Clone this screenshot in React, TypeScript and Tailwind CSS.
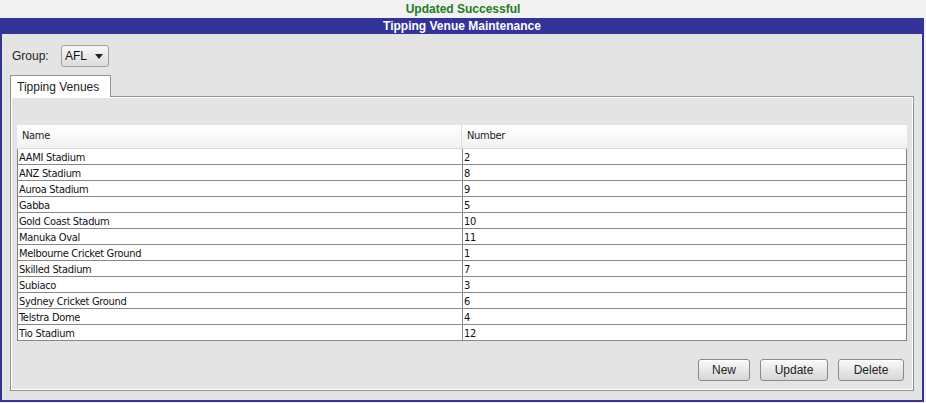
import React from 'react';

const venues: [string, number][] = [
  ['AAMI Stadium', 2],
  ['ANZ Stadium', 8],
  ['Auroa Stadium', 9],
  ['Gabba', 5],
  ['Gold Coast Stadum', 10],
  ['Manuka Oval', 11],
  ['Melbourne Cricket Ground', 1],
  ['Skilled Stadium', 7],
  ['Subiaco', 3],
  ['Sydney Cricket Ground', 6],
  ['Telstra Dome', 4],
  ['Tio Stadium', 12],
];

function Btn({ label, width }: { label: string; width: string }) {
  return (
    <button
      className={`${width} h-[22px] rounded-[3px] border border-[#8a8a8a] bg-gradient-to-b from-[#fafafa] to-[#d6d6d6] text-[12px] text-[#222] shadow-[inset_0_1px_0_#fff]`}
    >
      {label}
    </button>
  );
}

export default function App() {
  return (
    <div
      className="w-[926px] h-[403px] bg-[#f2f2f2] overflow-hidden"
      style={{ fontFamily: '"Liberation Sans", Arial, sans-serif' }}
    >
      <div className="h-[18px] flex items-center justify-center text-[12px] font-bold text-[#1e7d1e]">
        Updated Successful
      </div>
      <div className="w-[924px] h-[384px] border-l-2 border-r-2 border-b-2 border-[#333399] bg-[#e4e4e4] flex flex-col">
        <div className="h-[16px] -mx-[2px] bg-[#333399] flex items-center justify-center text-[12px] font-bold text-white">
          Tipping Venue Maintenance
        </div>
        <div className="flex items-center pl-[10px] pt-[11px] h-[33px]">
          <span className="text-[12px] text-[#222] w-[49px]">Group:</span>
          <div className="w-[48px] h-[22px] rounded-[3px] border border-[#a0a0a0] bg-gradient-to-b from-[#f8f8f8] to-[#dcdcdc] flex items-center pl-[3px] pr-[5px] justify-between">
            <span className="text-[12px] text-[#111]">AFL</span>
            <svg width="8" height="5" viewBox="0 0 8 5">
              <path d="M0 0h8L4 5z" fill="#222" />
            </svg>
          </div>
        </div>
        <div className="pl-[8px] pt-[8px]">
          <div className="w-[101px] h-[22px] border border-b-0 border-[#919191] bg-white flex items-center pl-[6px] text-[12px] text-[#222] relative z-10">
            Tipping Venues
          </div>
          <div className="-mt-px w-[904px] h-[295px] border border-[#919191] shadow-[inset_1px_1px_0_#fff,inset_-1px_-1px_0_#fff] px-[6px] pt-[28px] flex flex-col">
            <div
              className="w-[890px] text-[11px] text-[#111] tracking-[-0.3px]"
              style={{ fontFamily: '"DejaVu Sans Condensed", "DejaVu Sans", sans-serif' }}
            >
              <div className="flex h-[24px] bg-gradient-to-b from-white to-[#f2f2f2] border-b border-[#d8d8d8] text-[#222]">
                <div className="w-[445px] border-r border-[#dcdcdc] flex items-center pl-[5px]">Name</div>
                <div className="flex-1 flex items-center pl-[5px]">Number</div>
              </div>
              <div className="border-l border-r border-[#808080]">
                {venues.map(([name, num]) => (
                  <div key={name} className="flex h-[16px] bg-white border-b border-[#888]">
                    <div className="w-[445px] h-[15px] border-r border-[#888] pl-[1px] pt-[1px] leading-[16px]">{name}</div>
                    <div className="flex-1 h-[15px] pl-[1px] pt-[1px] leading-[16px]">{num}</div>
                  </div>
                ))}
              </div>
            </div>
            <div className="flex justify-end gap-[10px] mt-[18px] pr-[3px]">
              <Btn label="New" width="w-[52px]" />
              <Btn label="Update" width="w-[68px]" />
              <Btn label="Delete" width="w-[66px]" />
            </div>
          </div>
        </div>
      </div>
    </div>
  );
}
